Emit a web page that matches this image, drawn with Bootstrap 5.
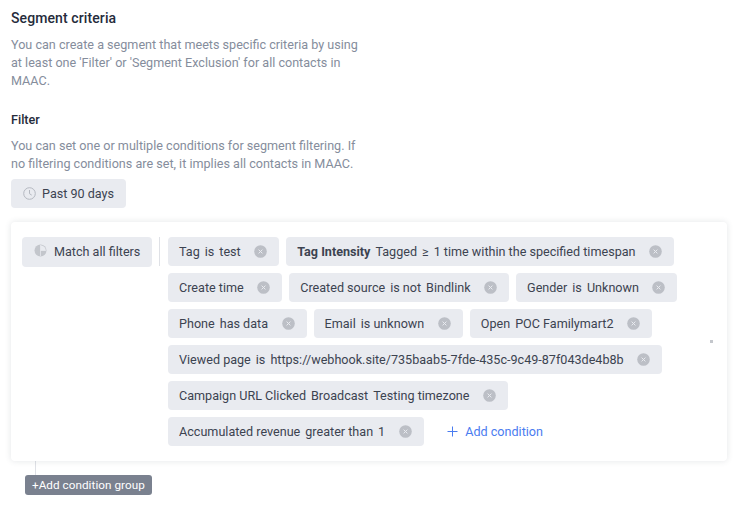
<!DOCTYPE html>
<html lang="en">
<head>
  <meta charset="UTF-8">
  <meta name="viewport" content="width=device-width, initial-scale=1">
  <title>Segment criteria</title>
  <link href="https://cdn.jsdelivr.net/npm/bootstrap@5.3.0/dist/css/bootstrap.min.css" rel="stylesheet">
  <style>
    body {
      font-family: Roboto, "Liberation Sans", sans-serif;
      font-size: 12.6px;
      line-height: 18px;
      color: #2f3542;
      background: #fff;
      overflow: hidden;
    }
    .page-wrap { padding: 8px 10px 0 11px; }
    .sec-title { font-size: 14px; line-height: 20px; font-weight: 500; letter-spacing: .1px; color: #252b3b; margin: 0 0 8px; }
    .sub-title { font-size: 12.6px; line-height: 18px; font-weight: 500; color: #252b3b; margin: 21px 0 8px; }
    .help-text { width: 352px; color: #858d9c; line-height: 18px; margin: 0; }
    .chip-btn {
      background: #e9ebf0;
      border-radius: 4px;
      height: 29px;
      color: #3c4350;
      white-space: nowrap;
    }
    .date-btn { width: 115px; padding-left: 12px; margin-top: 6px; gap: 6px; }
    .filter-box {
      height: 239px;
      margin-top: 14px;
      padding: 15px 11px;
      border-radius: 4px;
      background: #fff;
      box-shadow: 0 0 6px rgba(60, 68, 86, .14);
    }
    .match-btn { width: 130px; flex: none; padding-left: 12px; gap: 7px; height: 30px; }
    .divider { width: 1px; height: 29px; background: #dfe1e6; margin: 0 8px 0 7px; flex: none; }
    .chip-list { row-gap: 7px; column-gap: 7px; width: 530px; }
    .chip-item { padding: 0 12px 0 11px; gap: 13.5px; }
    .chip-item b { font-weight: 700; }
    .chip-part { margin-left: 5px; }
    .add-link { color: #4a7cf0; text-decoration: none; margin-left: 15px; gap: 6.5px; height: 29px; }
    .dot-mark { position: absolute; right: 14px; top: 118px; width: 3px; height: 3px; background: #c4c7cc; }
    .group-line { width: 1px; height: 14px; background: #dfe1e6; margin-left: 24px; }
    .add-group {
      display: block;
      margin-left: 14px;
      background: #7a818f;
      color: #fff;
      font-size: 11.7px;
      letter-spacing: .05px;
      line-height: 20px;
      padding: 0 7px;
      border-radius: 3px;
      border: 0;
    }
  </style>
</head>
<body>

<div class="page-wrap">
  <h5 class="sec-title">Segment criteria</h5>
  <p class="help-text">You can create a segment that meets specific criteria by using at least one 'Filter' or 'Segment Exclusion' for all contacts in MAAC.</p>

  <h6 class="sub-title">Filter</h6>
  <p class="help-text">You can set one or multiple conditions for segment filtering. If no filtering conditions are set, it implies all contacts in MAAC.</p>

  <div class="chip-btn date-btn d-flex align-items-center">
    <svg width="13" height="13" viewBox="0 0 13 13" fill="none" stroke="#b4b8c0"><circle cx="6.5" cy="6.5" r="5.8"/><path d="M6.5 3v3.7l2.2 1.4"/></svg>
    <span>Past 90 days</span>
  </div>

  <div class="filter-box position-relative d-flex align-items-start">
    <div class="chip-btn match-btn d-flex align-items-center">
      <svg width="13" height="13" viewBox="0 0 13 13" class="mb-1"><circle cx="6.5" cy="6.5" r="6" fill="#c3c6cc"/><path d="M6.5 1.2a5.3 5.3 0 0 1 5.3 5.3H6.5z" fill="#e9ebf0"/><path d="M6.5 6.5h5.3M6.5 1v11" stroke="#e9ebf0" stroke-width=".7"/></svg>
      <span>Match all filters</span>
    </div>
    <div class="divider"></div>
    <div class="chip-list d-flex flex-wrap align-items-start">
      <div class="chip-btn chip-item d-flex align-items-center"><span>Tag<span class="chip-part">is</span><span class="chip-part">test</span></span><svg width="13" height="13" viewBox="0 0 13 13"><use href="#x-icon"/></svg></div>
      <div class="chip-btn chip-item d-flex align-items-center"><span><b>Tag Intensity</b><span class="chip-part">Tagged</span><span class="chip-part">≥</span><span class="chip-part">1 time within the specified timespan</span></span><svg width="13" height="13" viewBox="0 0 13 13"><use href="#x-icon"/></svg></div>
      <div class="chip-btn chip-item d-flex align-items-center"><span>Create time</span><svg width="13" height="13" viewBox="0 0 13 13"><use href="#x-icon"/></svg></div>
      <div class="chip-btn chip-item d-flex align-items-center"><span>Created source<span class="chip-part">is not</span><span class="chip-part">Bindlink</span></span><svg width="13" height="13" viewBox="0 0 13 13"><use href="#x-icon"/></svg></div>
      <div class="chip-btn chip-item d-flex align-items-center"><span>Gender<span class="chip-part">is</span><span class="chip-part">Unknown</span></span><svg width="13" height="13" viewBox="0 0 13 13"><use href="#x-icon"/></svg></div>
      <div class="chip-btn chip-item d-flex align-items-center"><span>Phone<span class="chip-part">has data</span></span><svg width="13" height="13" viewBox="0 0 13 13"><use href="#x-icon"/></svg></div>
      <div class="chip-btn chip-item d-flex align-items-center"><span>Email<span class="chip-part">is unknown</span></span><svg width="13" height="13" viewBox="0 0 13 13"><use href="#x-icon"/></svg></div>
      <div class="chip-btn chip-item d-flex align-items-center"><span>Open<span class="chip-part">POC Familymart2</span></span><svg width="13" height="13" viewBox="0 0 13 13"><use href="#x-icon"/></svg></div>
      <div class="chip-btn chip-item d-flex align-items-center"><span>Viewed page<span class="chip-part">is</span><span class="chip-part">https://webhook.site/735baab5-7fde-435c-9c49-87f043de4b8b</span></span><svg width="13" height="13" viewBox="0 0 13 13"><use href="#x-icon"/></svg></div>
      <div class="chip-btn chip-item d-flex align-items-center"><span>Campaign URL Clicked<span class="chip-part">Broadcast</span><span class="chip-part">Testing timezone</span></span><svg width="13" height="13" viewBox="0 0 13 13"><use href="#x-icon"/></svg></div>
      <div class="chip-btn chip-item d-flex align-items-center"><span>Accumulated revenue<span class="chip-part">greater than</span><span class="chip-part">1</span></span><svg width="13" height="13" viewBox="0 0 13 13"><use href="#x-icon"/></svg></div>
      <a href="#" class="add-link d-flex align-items-center">
        <svg width="13" height="13" viewBox="0 0 13 13" fill="none" stroke="#4a7cf0"><path d="M6.5 1.5v10M1.5 6.5h10"/></svg>
        <span>Add condition</span>
      </a>
    </div>
    <div class="dot-mark"></div>
  </div>

  <div class="group-line"></div>
  <button type="button" class="add-group">+Add condition group</button>
</div>

<svg width="0" height="0" class="position-absolute">
  <symbol id="x-icon" viewBox="0 0 13 13">
    <circle cx="6.5" cy="6.5" r="6.3" fill="#bcbfc6"/>
    <path d="M4.6 4.6l3.8 3.8M8.4 4.6l-3.8 3.8" stroke="#e9ebf0" stroke-width="1"/>
  </symbol>
</svg>

<script src="https://cdn.jsdelivr.net/npm/bootstrap@5.3.0/dist/js/bootstrap.bundle.min.js"></script>
</body>
</html>
